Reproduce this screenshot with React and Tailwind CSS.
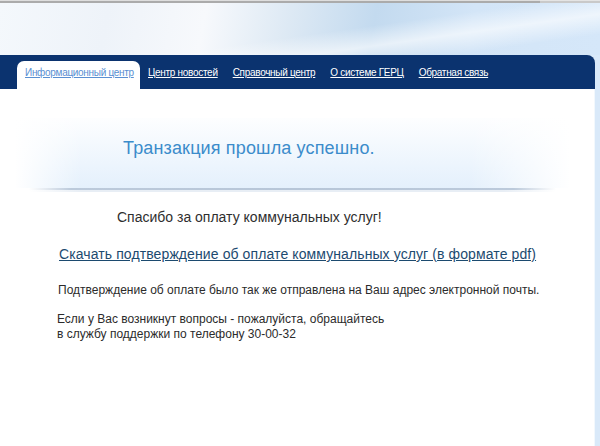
import React from 'react';

const navLinks = ['Центр новостей', 'Справочный центр', 'О системе ГЕРЦ', 'Обратная связь'];

export default function App() {
  return (
    <div className="w-[600px] h-[446px] overflow-hidden bg-[#d9e9f9] font-['Liberation_Sans',Arial,sans-serif]">
      {/* Browser top edge */}
      <div className="flex h-[3px]">
        <div className="w-[540px] flex flex-col">
          <div className="h-[1px] bg-[#dedede]" />
          <div className="h-[2px] bg-[#ababab]" />
        </div>
        <div className="flex-1 flex flex-col">
          <div className="h-[1px] bg-[#e4e4e4]" />
          <div className="h-[2px] bg-[#c9c9c9]" />
        </div>
      </div>

      {/* Sky header */}
      <div className="h-[52px] bg-[linear-gradient(172deg,transparent_55%,rgba(255,255,255,0.6)_70%,transparent_85%),linear-gradient(100deg,#f4f8fc_0%,#eef3f9_18%,#f7f9fc_34%,#dde9f4_48%,#c3daef_62%,#d3e5f7_78%,#d5e7f9_100%)]" />

      {/* Navigation */}
      <div className="mr-[5px] h-[34px] bg-[#0b336f] rounded-tr-[8px] flex items-end">
        <div className="ml-[17px] w-[123px] h-[28px] bg-white rounded-t-[7px] pl-[8px] pt-[5px]">
          <a href="#" className="block text-[10px] tracking-[-0.3px] leading-[13px] text-[#5a8fd2] underline whitespace-nowrap">
            Информационный центр
          </a>
        </div>
        <div className="flex gap-[15px] ml-[8px] h-full pt-[11px]">
          {navLinks.map((l) => (
            <a key={l} href="#" className="text-[10px] tracking-[-0.3px] leading-[13px] text-white underline whitespace-nowrap">
              {l}
            </a>
          ))}
        </div>
      </div>

      {/* Content */}
      <div className="w-[595px] h-[357px] bg-white border-r border-[#f2f8fd] pt-[29px]">
        <div className="mx-[15px] w-[555px]">
          <div className="h-[70px] pt-[19px] pl-[108px] bg-[linear-gradient(to_right,white,transparent_12%,transparent_82%,white),linear-gradient(to_bottom,#fdfeff,#e4f0fc)]">
            <div className="text-[18px] tracking-[0.15px] leading-[22px] text-[#3b8ccb]">Транзакция прошла успешно.</div>
          </div>
          <div className="mx-[14px] h-[2px] bg-[linear-gradient(to_right,transparent,#bccadb_8%,#b7c6d8_50%,#bccadb_92%,transparent)]" />
          <div className="mx-[14px] h-[2px] bg-[linear-gradient(to_right,transparent,#e8eef5_10%,#e8eef5_90%,transparent)]" />
        </div>

        <div className="ml-[117px] mt-[17px] text-[14px] leading-[16px] text-[#2e2e2e]">
          Спасибо за оплату коммунальных услуг!
        </div>

        <a href="#" className="block ml-[59px] mt-[20px] text-[14px] tracking-[0.1px] leading-[18px] text-[#1c4a6f] underline whitespace-nowrap">
          Скачать подтверждение об оплате коммунальных услуг (в формате pdf)
        </a>

        <p className="ml-[58px] mt-[20px] text-[12px] leading-[15px] text-[#2b2b2b] whitespace-nowrap">
          Подтверждение об оплате было так же отправлена на Ваш адрес электронной почты.
        </p>

        <p className="ml-[57px] mt-[14px] text-[12px] leading-[15px] text-[#2b2b2b]">
          Если у Вас возникнут вопросы - пожалуйста, обращайтесь
          <br />
          в службу поддержки по телефону 30-00-32
        </p>
      </div>
    </div>
  );
}
